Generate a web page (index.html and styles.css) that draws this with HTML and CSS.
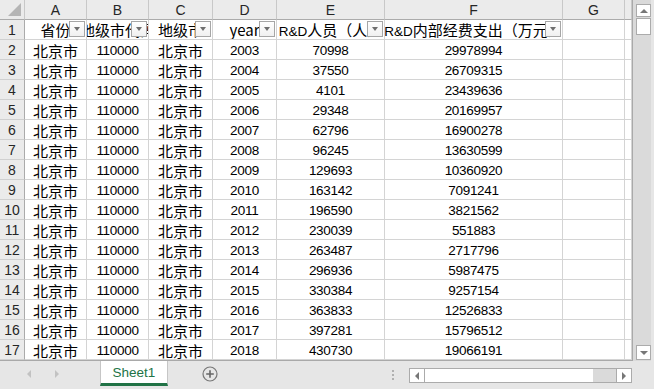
FILE: index.html
```html
<!DOCTYPE html>
<html>
<head>
<meta charset="utf-8">
<link rel="stylesheet" href="styles.css">
</head>
<body>
<div class="app">
  <div class="main">
    <div class="sheet">
      <div class="row hdr">
        <div class="corner"><span class="tri"></span></div>
        <div class="ch">A</div><div class="ch">B</div><div class="ch">C</div><div class="ch">D</div><div class="ch">E</div><div class="ch">F</div><div class="ch">G</div><div class="ch"></div>
      </div>
      <div class="row">
        <div class="rh">1</div>
        <div class="c f"><span class="t">省份</span><span class="dd"></span></div>
        <div class="c f"><span class="t">地级市代码</span><span class="dd"></span></div>
        <div class="c f"><span class="t">地级市</span><span class="dd"></span></div>
        <div class="c f"><span class="t lat">year</span><span class="dd"></span></div>
        <div class="c f"><span class="t"><span class="lat">R&amp;D</span>人员（人）</span><span class="dd"></span></div>
        <div class="c f"><span class="t"><span class="lat">R&amp;D</span>内部经费支出（万元）</span><span class="dd"></span></div>
        <div class="c"></div><div class="c"></div>
      </div>
      <div class="row"><div class="rh">2</div><div class="c z">北京市</div><div class="c n">110000</div><div class="c z">北京市</div><div class="c n">2003</div><div class="c n">70998</div><div class="c n">29978994</div><div class="c"></div><div class="c"></div></div>
      <div class="row"><div class="rh">3</div><div class="c z">北京市</div><div class="c n">110000</div><div class="c z">北京市</div><div class="c n">2004</div><div class="c n">37550</div><div class="c n">26709315</div><div class="c"></div><div class="c"></div></div>
      <div class="row"><div class="rh">4</div><div class="c z">北京市</div><div class="c n">110000</div><div class="c z">北京市</div><div class="c n">2005</div><div class="c n">4101</div><div class="c n">23439636</div><div class="c"></div><div class="c"></div></div>
      <div class="row"><div class="rh">5</div><div class="c z">北京市</div><div class="c n">110000</div><div class="c z">北京市</div><div class="c n">2006</div><div class="c n">29348</div><div class="c n">20169957</div><div class="c"></div><div class="c"></div></div>
      <div class="row"><div class="rh">6</div><div class="c z">北京市</div><div class="c n">110000</div><div class="c z">北京市</div><div class="c n">2007</div><div class="c n">62796</div><div class="c n">16900278</div><div class="c"></div><div class="c"></div></div>
      <div class="row"><div class="rh">7</div><div class="c z">北京市</div><div class="c n">110000</div><div class="c z">北京市</div><div class="c n">2008</div><div class="c n">96245</div><div class="c n">13630599</div><div class="c"></div><div class="c"></div></div>
      <div class="row"><div class="rh">8</div><div class="c z">北京市</div><div class="c n">110000</div><div class="c z">北京市</div><div class="c n">2009</div><div class="c n">129693</div><div class="c n">10360920</div><div class="c"></div><div class="c"></div></div>
      <div class="row"><div class="rh">9</div><div class="c z">北京市</div><div class="c n">110000</div><div class="c z">北京市</div><div class="c n">2010</div><div class="c n">163142</div><div class="c n">7091241</div><div class="c"></div><div class="c"></div></div>
      <div class="row"><div class="rh">10</div><div class="c z">北京市</div><div class="c n">110000</div><div class="c z">北京市</div><div class="c n">2011</div><div class="c n">196590</div><div class="c n">3821562</div><div class="c"></div><div class="c"></div></div>
      <div class="row"><div class="rh">11</div><div class="c z">北京市</div><div class="c n">110000</div><div class="c z">北京市</div><div class="c n">2012</div><div class="c n">230039</div><div class="c n">551883</div><div class="c"></div><div class="c"></div></div>
      <div class="row"><div class="rh">12</div><div class="c z">北京市</div><div class="c n">110000</div><div class="c z">北京市</div><div class="c n">2013</div><div class="c n">263487</div><div class="c n">2717796</div><div class="c"></div><div class="c"></div></div>
      <div class="row"><div class="rh">13</div><div class="c z">北京市</div><div class="c n">110000</div><div class="c z">北京市</div><div class="c n">2014</div><div class="c n">296936</div><div class="c n">5987475</div><div class="c"></div><div class="c"></div></div>
      <div class="row"><div class="rh">14</div><div class="c z">北京市</div><div class="c n">110000</div><div class="c z">北京市</div><div class="c n">2015</div><div class="c n">330384</div><div class="c n">9257154</div><div class="c"></div><div class="c"></div></div>
      <div class="row"><div class="rh">15</div><div class="c z">北京市</div><div class="c n">110000</div><div class="c z">北京市</div><div class="c n">2016</div><div class="c n">363833</div><div class="c n">12526833</div><div class="c"></div><div class="c"></div></div>
      <div class="row"><div class="rh">16</div><div class="c z">北京市</div><div class="c n">110000</div><div class="c z">北京市</div><div class="c n">2017</div><div class="c n">397281</div><div class="c n">15796512</div><div class="c"></div><div class="c"></div></div>
      <div class="row"><div class="rh">17</div><div class="c z">北京市</div><div class="c n">110000</div><div class="c z">北京市</div><div class="c n">2018</div><div class="c n">430730</div><div class="c n">19066191</div><div class="c"></div><div class="c"></div></div>
    </div>
    <div class="vscroll">
      <div class="vbtn up"><span class="arr-up"></span></div>
      <div class="vthumb"></div>
      <div class="vspace"></div>
      <div class="vbtn down"><span class="arr-down"></span></div>
    </div>
  </div>
  <div class="tabbar">
    <div class="nav"><span class="arr-l"></span><span class="arr-r"></span></div>
    <div class="tab">Sheet1</div>
    <div class="add">
      <svg width="16" height="16" viewBox="0 0 16 16"><circle cx="8" cy="8" r="7" fill="none" stroke="#777" stroke-width="1.2"/><path d="M8 4.2v7.6M4.2 8h7.6" stroke="#666" stroke-width="1.6"/></svg>
    </div>
    <div class="spacer"></div>
    <div class="dots"><i></i><i></i><i></i></div>
    <div class="hscroll">
      <div class="hbtn"><span class="arr-l2"></span></div>
      <div class="hthumb"></div>
      <div class="htrack"></div>
      <div class="hbtn"><span class="arr-r2"></span></div>
    </div>
    <div class="tail"></div>
  </div>
</div>
</body>
</html>
```

FILE: styles.css
```css
html, body {
  margin: 0;
  padding: 0;
}
body {
  width: 654px;
  height: 389px;
  overflow: hidden;
  background: #e6e6e6;
  font-family: "Liberation Sans", "Noto Sans CJK SC", sans-serif;
  color: #000;
}
.app {
  display: flex;
  flex-direction: column;
  width: 654px;
  height: 389px;
}
.main {
  display: flex;
  height: 361px;
}
.sheet {
  width: 632px;
  height: 360px;
  background: #fff;
  border-right: 1px solid #a9a9a9;
  border-bottom: 1px solid #a9a9a9;
  overflow: hidden;
}
.row {
  display: grid;
  grid-template-columns: 25px 62px 62px 64px 64px 108px 178px 62px 7px;
  height: 20px;
}
.row > div {
  box-sizing: border-box;
  border-right: 1px solid #d4d4d4;
  border-bottom: 1px solid #d4d4d4;
  position: relative;
  overflow: hidden;
  white-space: nowrap;
  display: flex;
  align-items: center;
  justify-content: center;
}
.hdr > div {
  background: #ebebeb;
  border-right: 1px solid #c8c8c8;
  border-bottom: 1px solid #ababab;
  font-size: 14px;
  color: #262626;
}
.corner {
  justify-content: flex-end !important;
  align-items: flex-end !important;
}
.tri {
  width: 0;
  height: 0;
  border-left: 13px solid transparent;
  border-bottom: 13px solid #b5b5b5;
  margin: 0 3px 3px 0;
}
.rh {
  background: #ebebeb;
  border-right: 1px solid #ababab !important;
  border-bottom: 1px solid #d0d0d0 !important;
  font-size: 14px;
  color: #262626;
  padding-top: 1px;
}
.c {
  font-size: 15px;
}
.n {
  font-size: 13.5px;
  padding-top: 2px;
  letter-spacing: -0.3px;
}
.z {
  font-size: 15px;
  font-family: "Noto Sans CJK SC", sans-serif;
  padding-top: 1px;
}
.f .t {
  font-family: "Noto Sans CJK SC", sans-serif;
  font-size: 15px;
  flex-shrink: 0;
}
.lat {
  font-family: "Liberation Sans", sans-serif;
  font-size: 13.5px;
}
.dd {
  position: absolute;
  right: 1px;
  bottom: 2px;
  width: 16px;
  height: 16px;
  box-sizing: border-box;
  border: 1px solid #a6a6a6;
  background: linear-gradient(#ffffff, #f0f0f0);
}
.dd::after {
  content: "";
  position: absolute;
  left: 3.5px;
  top: 5px;
  border-left: 3.5px solid transparent;
  border-right: 3.5px solid transparent;
  border-top: 4px solid #6f6f6f;
}
.vscroll {
  width: 21px;
  height: 361px;
  box-sizing: border-box;
  background: linear-gradient(to right, #dadada 18px, #e6e6e6 18px);
  padding: 4px 3px 1px 3px;
  display: flex;
  flex-direction: column;
}
.vbtn {
  height: 13px;
  width: 15px;
  box-sizing: border-box;
  border: 1px solid #ababab;
  background: #fff;
  display: flex;
  align-items: center;
  justify-content: center;
}
.vbtn.down {
  height: 15px;
}
.vthumb {
  margin-top: 1px;
  height: 17px;
  width: 15px;
  box-sizing: border-box;
  border: 1px solid #ababab;
  background: #fff;
}
.vspace {
  flex: 1;
}
.arr-up {
  border-left: 4px solid transparent;
  border-right: 4px solid transparent;
  border-bottom: 4px solid #777;
}
.arr-down {
  border-left: 4px solid transparent;
  border-right: 4px solid transparent;
  border-top: 4px solid #777;
}
.tabbar {
  height: 28px;
  display: flex;
  align-items: flex-start;
}
.nav {
  width: 100px;
  height: 26px;
  display: flex;
  align-items: center;
  gap: 24px;
  padding-left: 27px;
  box-sizing: border-box;
}
.arr-l {
  border-top: 4px solid transparent;
  border-bottom: 4px solid transparent;
  border-right: 4px solid #c2c2c2;
}
.arr-r {
  border-top: 4px solid transparent;
  border-bottom: 4px solid transparent;
  border-left: 4px solid #c2c2c2;
}
.tab {
  width: 68px;
  height: 25px;
  box-sizing: border-box;
  background: #fff;
  border-left: 1px solid #c6c6c6;
  border-right: 1px solid #c6c6c6;
  border-bottom: 3px solid #217346;
  color: #217346;
  font-size: 13.5px;
  display: flex;
  align-items: center;
  justify-content: center;
  padding-top: 1px;
}
.add {
  margin-left: 34px;
  margin-top: 5px;
  width: 16px;
  height: 16px;
}
.spacer {
  flex: 1;
}
.dots {
  display: flex;
  flex-direction: column;
  gap: 2px;
  margin-top: 9px;
  margin-right: 15px;
}
.dots i {
  width: 2px;
  height: 2px;
  background: #b0b0b0;
}
.hscroll {
  margin-top: 7px;
  width: 223px;
  height: 15px;
  box-sizing: border-box;
  border: 1px solid #ababab;
  background: #dadada;
  display: flex;
}
.hbtn {
  width: 14px;
  background: #fff;
  display: flex;
  align-items: center;
  justify-content: center;
}
.hbtn:first-child {
  border-right: 1px solid #ababab;
}
.hbtn:last-child {
  border-left: 1px solid #ababab;
}
.hthumb {
  width: 168px;
  background: #fff;
}
.htrack {
  flex: 1;
}
.arr-l2 {
  border-top: 4px solid transparent;
  border-bottom: 4px solid transparent;
  border-right: 4px solid #777;
}
.arr-r2 {
  border-top: 4px solid transparent;
  border-bottom: 4px solid transparent;
  border-left: 4px solid #777;
}
.tail {
  width: 22px;
}
```
